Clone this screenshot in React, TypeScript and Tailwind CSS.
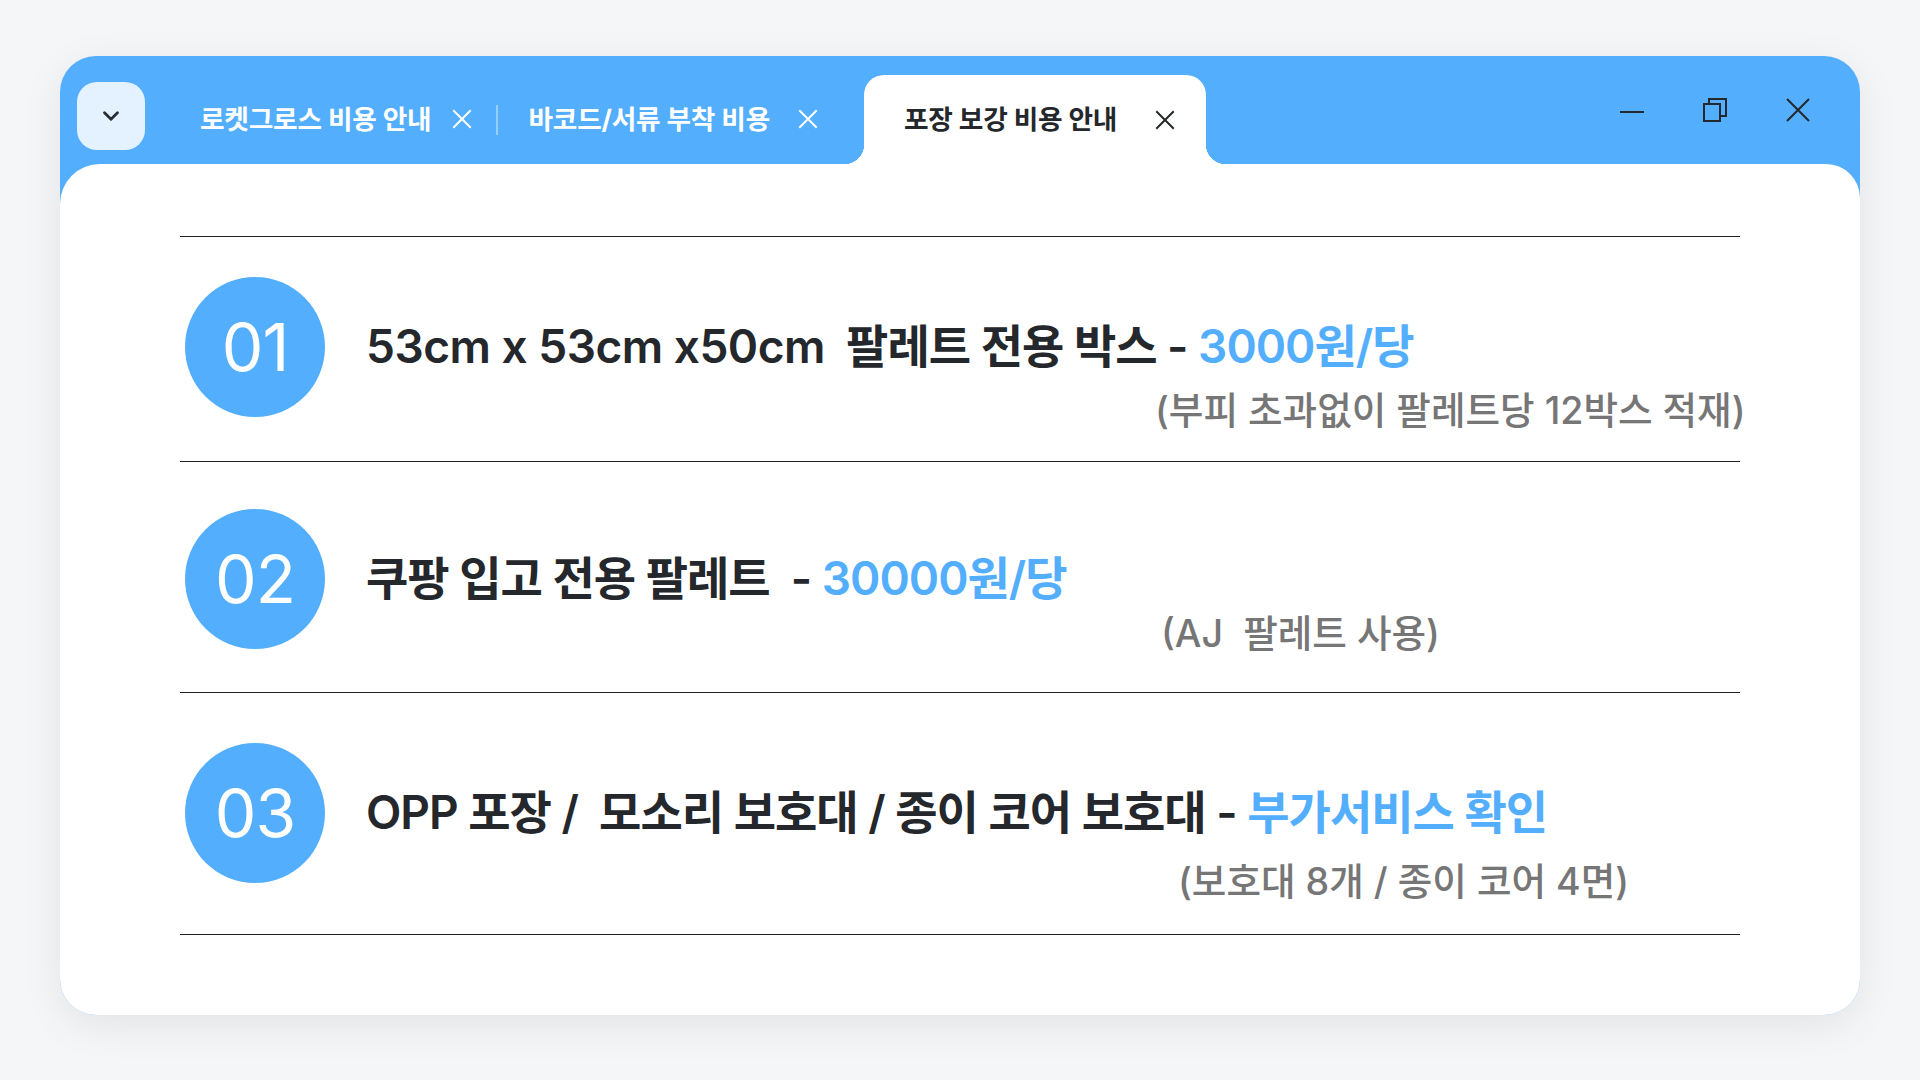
import React from 'react';

const BLUE = '#54aefe';

const CloseIcon = ({ className = '' }: { className?: string }) => (
  <svg viewBox="0 0 20 20" className={className} fill="none" stroke="currentColor" strokeWidth="2" strokeLinecap="square">
    <path d="M2 2L18 18M18 2L2 18" />
  </svg>
);

interface Row {
  num: string;
  lead?: string;
  title: string;
  highlight: string;
  sub: string;
  pt: string;
  subClass: string;
}

const rows: Row[] = [
  {
    num: '01',
    lead: '53cm x 53cm x50cm',
    title: '  팔레트 전용 박스 - ',
    highlight: '3000원/당',
    sub: '(부피 초과없이 팔레트당 12박스 적재)',
    pt: 'pt-[40px]',
    subClass: 'pl-[975px] -mt-[28px] pb-[28px]',
  },
  {
    num: '02',
    title: '쿠팡 입고 전용 팔레트  - ',
    highlight: '30000원/당',
    sub: '(AJ  팔레트 사용)',
    pt: 'pt-[47px]',
    subClass: 'pl-[981px] -mt-[37px] pb-[36px]',
  },
  {
    num: '03',
    title: 'OPP 포장 /  모소리 보호대 / 종이 코어 보호대 - ',
    highlight: '부가서비스 확인',
    sub: '(보호대 8개 / 종이 코어 4면)',
    pt: 'pt-[50px]',
    subClass: 'pl-[998px] -mt-[23px] pb-[30px]',
  },
];

export default function App() {
  return (
    <div className="min-h-screen w-full bg-[#f5f6f8] pt-[56px] px-[60px] font-['Inter','Noto_Sans_CJK_KR',sans-serif]">
      <div className="w-[1800px] h-[959px] rounded-[36px] bg-[#54aefe] shadow-[0_10px_40px_rgba(0,0,0,0.08)] flex flex-col overflow-hidden">
        {/* Title bar with tabs */}
        <div className="h-[108px] flex shrink-0">
          <button className="ml-[17px] mt-[26px] w-[68px] h-[68px] rounded-[20px] bg-[#e3f2fe] flex items-center justify-center text-[#2a2d31]">
            <svg viewBox="0 0 24 24" className="w-[26px] h-[26px]" fill="none" stroke="currentColor" strokeWidth="2.6" strokeLinecap="round" strokeLinejoin="round">
              <polyline points="6 9 12 15 18 9" />
            </svg>
          </button>

          <div className="self-end h-[89px] flex items-center">
            <div className="ml-[55px] flex items-center gap-[21px] text-white">
              <span className="text-[26.7px] font-bold tracking-[-0.2px]">로켓그로스 비용 안내</span>
              <CloseIcon className="w-[20px] h-[20px]" />
            </div>
            <div className="ml-[24px] w-[2px] h-[30px] bg-white/40" />
            <div className="ml-[30px] flex items-center gap-[28px] text-white">
              <span className="text-[26.7px] font-bold tracking-[-0.2px]">바코드/서류 부착 비용</span>
              <CloseIcon className="w-[20px] h-[20px]" />
            </div>
          </div>

          <div className="relative self-end ml-[46px] w-[342px] h-[89px] bg-white rounded-t-[20px] flex items-center pl-[40px] text-[#24272b]">
            <div className="absolute -left-[20px] bottom-0 w-[20px] h-[20px] bg-[radial-gradient(circle_at_0_0,transparent_20px,#ffffff_20.5px)]" />
            <div className="absolute -right-[20px] bottom-0 w-[20px] h-[20px] bg-[radial-gradient(circle_at_100%_0,transparent_20px,#ffffff_20.5px)]" />
            <span className="text-[26.7px] font-bold tracking-[-0.2px]">포장 보강 비용 안내</span>
            <CloseIcon className="ml-[38px] w-[20px] h-[20px]" />
          </div>

          <div className="ml-auto mr-[50px] mt-[42px] h-[24px] flex items-center gap-[59px] text-[#24272b]">
            <svg viewBox="0 0 24 24" className="w-[24px] h-[24px]" fill="none" stroke="currentColor" strokeWidth="2">
              <path d="M0 14H24" />
            </svg>
            <svg viewBox="0 0 24 24" className="w-[24px] h-[24px]" fill="none" stroke="currentColor" strokeWidth="2">
              <rect x="1" y="6" width="16" height="17" />
              <path d="M6 6V1H23V18H17" />
            </svg>
            <svg viewBox="0 0 24 24" className="w-[24px] h-[24px]" fill="none" stroke="currentColor" strokeWidth="2">
              <path d="M1 1L23 23M23 1L1 23" />
            </svg>
          </div>
        </div>

        {/* Content */}
        <div className="flex-1 bg-white rounded-tl-[40px] rounded-tr-[34px] px-[120px] pt-[72px]">
          <div className="border-t border-[#222222]">
            {rows.map((r) => (
              <div key={r.num} className={`border-b border-[#222222] ${r.pt}`}>
                <div className="flex items-center">
                  <div
                    className="ml-[5px] w-[140px] h-[140px] rounded-full flex items-center justify-center text-white text-[66px] font-normal tracking-[-1px] shrink-0"
                    style={{ backgroundColor: BLUE }}
                  >
                    {r.num}
                  </div>
                  <div className="ml-[41px] whitespace-pre text-[46px] font-semibold tracking-[-1px] text-[#24272b] leading-[1.2]">
                    {r.lead && <span className="tracking-[-0.5px]">{r.lead}</span>}
                    {r.title}
                    <span className="text-[#54aefe]">{r.highlight}</span>
                  </div>
                </div>
                <div className={`${r.subClass} whitespace-pre text-[37.6px] font-medium text-[#767676] leading-[44px]`}>
                  {r.sub}
                </div>
              </div>
            ))}
          </div>
        </div>
      </div>
    </div>
  );
}
